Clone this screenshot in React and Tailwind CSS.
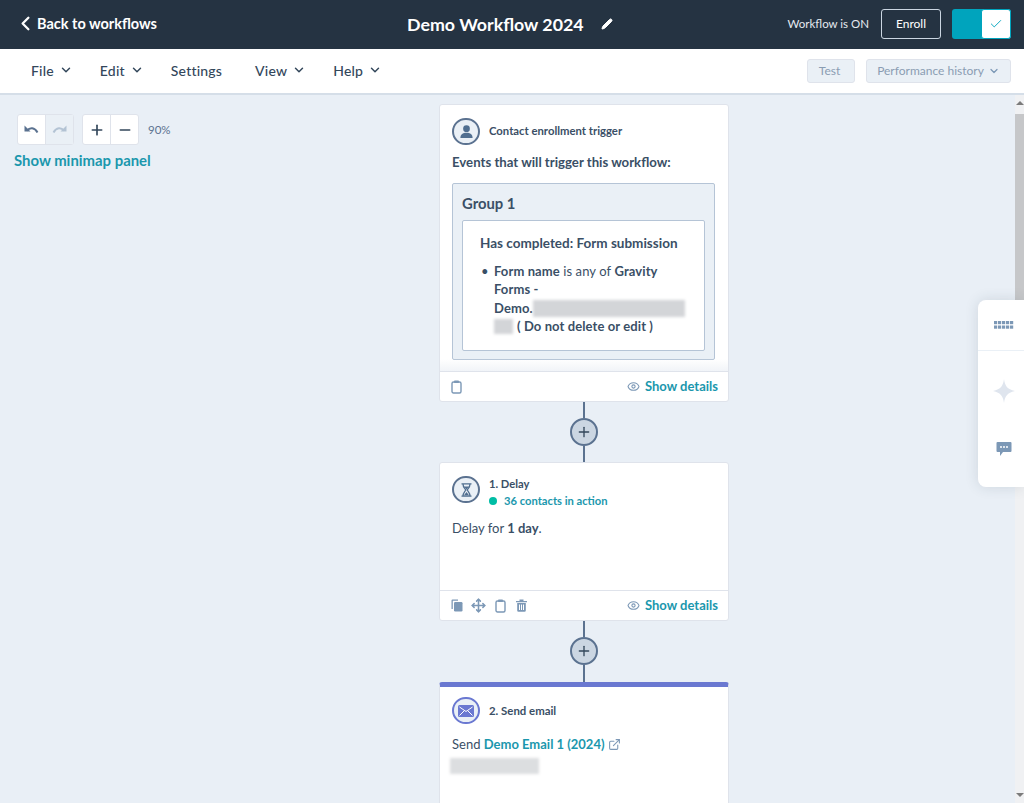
import React from "react";
import { ChevronLeft, ChevronDown, Pencil, Check, Plus, Minus, Eye, Move, ExternalLink } from "lucide-react";

const Connector = ({ long }) => (
  <div className="flex flex-col items-center">
    <div className="w-[2px] h-[16px] bg-[#5b7290]" />
    <div className="w-[28px] h-[28px] rounded-full bg-[#cbd6e2] border-2 border-[#5b7290] flex items-center justify-center text-[#33475b]">
      <Plus size={16} strokeWidth={2} />
    </div>
    <div className={long ? "w-[2px] h-[17px] bg-[#5b7290]" : "w-[2px] h-[16px] bg-[#5b7290]"} />
  </div>
);

const ShowDetails = () => (
  <div className="ml-auto flex items-center gap-[5px]">
    <Eye size={13} className="text-[#7c98b6]" />
    <span className="text-[13px] font-bold text-[#1b97ad]">Show details</span>
  </div>
);

const ClipboardIcon = ({ className }) => (
  <svg width="11" height="14" viewBox="0 0 11 14" fill="none" className={className}>
    <rect x="1" y="2" width="9" height="11" rx="1.5" stroke="#7c98b6" strokeWidth="1.4" />
    <rect x="3" y="0.500" width="5" height="2.500" rx="0.8" fill="#7c98b6" />
  </svg>
);

const CopyIcon = () => (
  <svg width="12" height="13" viewBox="0 0 12 13" fill="#7c98b6">
    <path d="M0.500 1.500a1 1 0 0 1 1-1H7v1.300H1.800V10H0.500z" />
    <rect x="3" y="3" width="8.500" height="9.500" rx="1.200" />
  </svg>
);

const TrashIcon = ({ className }) => (
  <svg width="11" height="13" viewBox="0 0 11 13" fill="#7c98b6" className={className}>
    <path d="M0 2h11v1.300H0zM3.500 0.500h4V2h-4z" />
    <path d="M1.200 4h8.600v7.500a1.300 1.300 0 0 1-1.300 1.300h-6a1.300 1.300 0 0 1-1.300-1.300zM3 5.500v5.500h1V5.500zM5 5.500v5.500h1V5.500zM7 5.500v5.500h1V5.500z" fillRule="evenodd" />
  </svg>
);

const Blur = ({ className }) => <div className={`blur-[1.5px] ${className}`} />;

const TopMenu = ({ label, chevron = true, className = "" }) => (
  <div className={`flex items-center gap-[5px] text-[14px] tracking-[0.2px] text-[#33475b] font-medium ${className}`}>
    {label}
    {chevron && <ChevronDown size={14} strokeWidth={2.5} />}
  </div>
);

const UndoIcon = ({ color, flip }) => (
  <svg width="15" height="9" viewBox="0 0 15 9" fill="none" className={flip ? "-scale-x-100" : ""}>
    <path d="M0.500 0.500v6h6z" fill={color} />
    <path d="M3 5.500c3-3.300 7.500-3.300 10.500 2" stroke={color} strokeWidth="2" />
  </svg>
);

export default function App() {
  return (
    <div className="relative w-[1024px] h-[803px] overflow-hidden bg-[#e9eff6] text-[#3a4f66] font-['Lato','Noto_Sans',sans-serif]">
      <header className="h-[49px] pb-[2px] bg-[#253342] flex items-center text-white">
        <div className="w-[390px] pl-[14px] flex items-center gap-0 text-[14.5px] font-bold">
          <ChevronLeft size={23} strokeWidth={2.4} />
          Back to workflows
        </div>
        <div className="flex items-center text-[17.8px] font-bold ml-[17px] mt-[1px]">
          Demo Workflow 2024
          <Pencil size={12} fill="white" className="ml-[17px]" />
        </div>
        <div className="ml-auto flex items-center pr-[13px]">
          <span className="text-[11.5px] mr-[12px] text-[#e5eaf0]">Workflow is ON</span>
          <div className="w-[60px] h-[30px] border border-[#cbd6e2] rounded-[3px] flex items-center justify-center text-[12px] mr-[11px]">Enroll</div>
          <div className="w-[59px] h-[30px] rounded-[3px] bg-[#00a4bd] flex justify-end">
            <div className="w-[30px] h-[30px] bg-white border border-[#00a4bd] rounded-[3px] flex items-center justify-center">
              <Check size={14} strokeWidth={1.6} className="text-[#00a4bd]" />
            </div>
          </div>
        </div>
      </header>
      <nav className="h-[46px] pb-[2px] bg-white border-b-2 border-[#d5dee8] flex items-center pl-[31px] pr-[13px]">
        <div className="flex items-center gap-[27px]">
          <TopMenu label="File" />
          <TopMenu label="Edit" />
          <TopMenu label="Settings" chevron={false} className="mr-[6px]" />
          <TopMenu label="View" />
          <TopMenu label="Help" />
        </div>
        <div className="ml-auto mt-[2px] flex items-center gap-[11px] text-[12px] text-[#8a9db3]">
          <div className="w-[48px] h-[24px] bg-[#eaf0f6] border border-[#dfe3eb] rounded-[3px] flex items-center justify-center pr-[3px]">Test</div>
          <div className="w-[145px] h-[24px] bg-[#eaf0f6] border border-[#dfe3eb] rounded-[3px] flex items-center justify-center gap-[4px]">
            Performance history
            <ChevronDown size={12} strokeWidth={2.5} className="text-[#7c98b6]" />
          </div>
        </div>
      </nav>

      <main className="flex items-start">
        <div className="w-[439px] shrink-0 pt-[19px] pl-[14px]">
          <div className="flex items-center pl-[3px]">
            <div className="flex rounded-[3px] border border-[#dfe3eb] bg-white">
              <div className="w-[27px] h-[29px] flex items-center justify-center"><UndoIcon color="#5b7290" /></div>
              <div className="w-[28px] h-[29px] flex items-center justify-center bg-[#eaf0f6] border-l border-[#dfe3eb]"><UndoIcon color="#b3c3d4" flip /></div>
            </div>
            <div className="flex ml-[8px] rounded-[3px] border border-[#dfe3eb] bg-white text-[#33475b]">
              <div className="w-[27px] h-[29px] flex items-center justify-center"><Plus size={16} strokeWidth={2.5} /></div>
              <div className="w-[28px] h-[29px] flex items-center justify-center border-l border-[#dfe3eb]"><Minus size={16} strokeWidth={2.5} /></div>
            </div>
            <span className="ml-[9px] text-[11.5px] text-[#5b7290]">90%</span>
          </div>
          <div className="mt-[5px] text-[14.9px] font-bold text-[#1b97ad] leading-[20px]">Show minimap panel</div>
        </div>

        <div className="w-[290px] shrink-0 pt-[9px] flex flex-col">
          <section className="h-[298px] bg-white border border-[#dfe3eb] rounded-[3px] flex flex-col">
            <div className="relative flex-1 pl-[12px] pr-[13px] pt-[13px]">
              <div className="flex items-center gap-[9px]">
                <div className="w-[28px] h-[27px] rounded-full border-2 border-[#5b7290] bg-[#eaf0f6] flex items-center justify-center">
                  <svg width="15" height="15" viewBox="0 0 16 16" fill="#516f90"><circle cx="8" cy="5" r="3.6" /><path d="M1.500 15c0-4 2.600-5.600 6.500-5.600S14.500 11 14.500 15z" /></svg>
                </div>
                <span className="text-[11.3px] font-bold">Contact enrollment trigger</span>
              </div>
              <div className="mt-[8px] text-[13.2px] font-bold">Events that will trigger this workflow:</div>
              <div className="mt-[10px] h-[177px] bg-[#eaf0f6] border border-[#b5c4d6] rounded-[2px] px-[9px] pt-[10px]">
                <div className="text-[14.8px] font-bold leading-[18px]">Group 1</div>
                <div className="mt-[8px] h-[131px] bg-white border border-[#b5c4d6] rounded-[2px] pl-[17px] pt-[13px] pr-[10px]">
                  <div className="text-[13.5px] font-bold leading-[18px]">Has completed: Form submission</div>
                  <div className="mt-[10px] relative pl-[14px] text-[13px] tracking-[0.1px] leading-[18.500px]">
                    <span className="absolute left-[1px] top-[0px]">•</span>
                    <div><b>Form name</b> is any of <b>Gravity</b></div>
                    <div><b>Forms -</b></div>
                    <div className="flex items-center"><b>Demo.</b><Blur className="w-[152px] h-[17px] bg-[#d3d5d8]" /></div>
                    <div className="flex items-center"><Blur className="w-[19px] h-[15px] mr-[4px] bg-[#d3d5d8]" /><b>( Do not delete or edit )</b></div>
                  </div>
                </div>
              </div>
              <div className="absolute left-0 right-0 bottom-0 h-[12px] bg-gradient-to-b from-transparent to-[#f1f4f8]" />
            </div>
            <div className="h-[30px] border-t border-[#dfe3eb] flex items-center px-[10px]">
              <div className="ml-[1px]"><ClipboardIcon /></div>
              <ShowDetails />
            </div>
          </section>

          <Connector />

          <section className="h-[159px] bg-white border border-[#dfe3eb] rounded-[3px] flex flex-col">
            <div className="flex-1 pl-[12px] pr-[13px] pt-[13px]">
              <div className="flex gap-[9px]">
                <div className="w-[28px] h-[27px] rounded-full border-2 border-[#5b7290] bg-[#eaf0f6] flex items-center justify-center">
                  <svg width="11" height="14" viewBox="0 0 11 14" fill="none"><path d="M0.500 0.800h10M0.500 13.200h10M2 1c0 3 1.500 4 2.800 6-1.300 2-2.800 3-2.800 6M9 1c0 3-1.500 4-2.800 6 1.300 2 2.800 3 2.800 6" stroke="#516f90" strokeWidth="1.300" /><path d="M3 3.500h5L5.500 6.500zM2.800 12.500L5.500 9l2.700 3.500z" fill="#516f90" /></svg>
                </div>
                <div>
                  <div className="text-[11.2px] font-bold leading-[15px]">1. Delay</div>
                  <div className="flex items-center mt-[2px]">
                    <span className="w-[8px] h-[8px] rounded-full bg-[#00bda5]" />
                    <span className="ml-[7px] text-[11.2px] font-bold text-[#1b97ad] leading-[15px]">36 contacts in action</span>
                  </div>
                </div>
              </div>
              <div className="mt-[11px] text-[13px]">Delay for <b>1 day</b>.</div>
            </div>
            <div className="h-[30px] border-t border-[#dfe3eb] flex items-center px-[10px]">
              <div className="ml-[1px] flex items-center">
                <CopyIcon />
                <Move size={15} strokeWidth={2.5} className="ml-[8px] text-[#7c98b6]" />
                <ClipboardIcon className="ml-[9px]" />
                <TrashIcon className="ml-[10px]" />
              </div>
              <ShowDetails />
            </div>
          </section>

          <Connector long />

          <section className="h-[130px] bg-white border-x border-[#dfe3eb] border-t-[5px] border-t-[#6a78d1] rounded-t-[3px] pl-[12px] pr-[13px] pt-[10px]">
            <div className="flex items-center gap-[9px]">
              <div className="w-[28px] h-[27px] rounded-full border-2 border-[#6a78d1] bg-[#eaf0f6] flex items-center justify-center">
                <svg width="16" height="12" viewBox="0 0 16 12"><rect width="16" height="12" rx="1.500" fill="#6a78d1" /><path d="M1.500 2l6.500 4.500L14.500 2M1.500 10.500L6 6M14.500 10.500L10 6" stroke="white" strokeWidth="1" fill="none" /></svg>
              </div>
              <span className="text-[11.4px] font-bold">2. Send email</span>
            </div>
            <div className="mt-[11px] flex items-center text-[13px]">
              Send&nbsp;<b className="text-[#1b97ad]">Demo Email 1 (2024)</b>
              <ExternalLink size={13} className="ml-[3px] text-[#7c98b6]" />
            </div>
            <Blur className="mt-[3px] -ml-[2px] w-[89px] h-[16px] bg-[#dcdee0]" />
          </section>
        </div>
      </main>

      <div className="absolute right-0 top-[95px] w-[9px] h-[708px] bg-[#f0f1f3] flex flex-col items-center justify-between py-[6px]">
        <div className="w-0 h-0 border-x-[4px] border-x-transparent border-b-[4px] border-b-[#7b7b7b]" />
        <div className="w-0 h-0 border-x-[4px] border-x-transparent border-t-[4px] border-t-[#7b7b7b]" />
      </div>
      <div className="absolute right-0 top-[114px] w-[9px] h-[200px] bg-[#c6c7c9]" />
      <div className="absolute right-0 top-[300px] w-[46px] h-[187px] pl-[6px] bg-white rounded-l-[8px] shadow-[0_0_14px_rgba(45,62,80,0.14)] flex flex-col items-center">
        <div className="absolute left-0 top-[50px] w-full border-b border-[#eaf0f6]" />
        <div className="mt-[21px]">
          <svg width="20" height="8" viewBox="0 0 20 8" fill="#7c98b6">
            {[0, 4, 8, 12, 16].map((x) => (
              <g key={x}>
                <rect x={x} y="0" width="3.200" height="3.200" />
                <rect x={x} y="4.500" width="3.200" height="3.200" />
              </g>
            ))}
          </svg>
        </div>
        <div className="mt-[50px]">
          <svg width="22" height="24" viewBox="0 0 22 24" fill="#dfe5ee"><path d="M11 0c1 7 3 10 11 12-8 2-10 5-11 12-1-7-3-10-11-12 8-2 10-5 11-12z" /></svg>
        </div>
        <div className="mt-[38px]">
          <svg width="16" height="16" viewBox="0 0 16 16"><path d="M1.500 1h13a1 1 0 0 1 1 1v8a1 1 0 0 1-1 1H7l-3 4v-4H1.500a1 1 0 0 1-1-1V2a1 1 0 0 1 1-1z" fill="#7c98b6" /><circle cx="5" cy="6" r="1" fill="white" /><circle cx="8" cy="6" r="1" fill="white" /><circle cx="11" cy="6" r="1" fill="white" /></svg>
        </div>
      </div>
    </div>
  );
}
